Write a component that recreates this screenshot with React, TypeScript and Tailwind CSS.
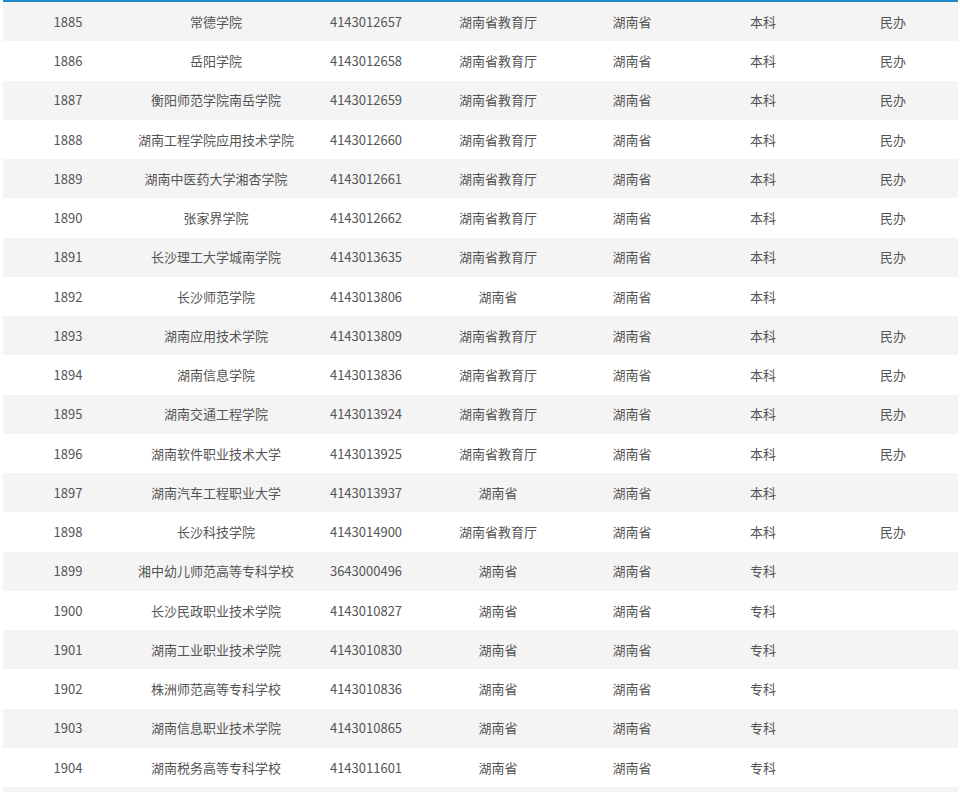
const rows: string[][] = [
  ["1885", "常德学院", "4143012657", "湖南省教育厅", "湖南省", "本科", "民办"],
  ["1886", "岳阳学院", "4143012658", "湖南省教育厅", "湖南省", "本科", "民办"],
  ["1887", "衡阳师范学院南岳学院", "4143012659", "湖南省教育厅", "湖南省", "本科", "民办"],
  ["1888", "湖南工程学院应用技术学院", "4143012660", "湖南省教育厅", "湖南省", "本科", "民办"],
  ["1889", "湖南中医药大学湘杏学院", "4143012661", "湖南省教育厅", "湖南省", "本科", "民办"],
  ["1890", "张家界学院", "4143012662", "湖南省教育厅", "湖南省", "本科", "民办"],
  ["1891", "长沙理工大学城南学院", "4143013635", "湖南省教育厅", "湖南省", "本科", "民办"],
  ["1892", "长沙师范学院", "4143013806", "湖南省", "湖南省", "本科", ""],
  ["1893", "湖南应用技术学院", "4143013809", "湖南省教育厅", "湖南省", "本科", "民办"],
  ["1894", "湖南信息学院", "4143013836", "湖南省教育厅", "湖南省", "本科", "民办"],
  ["1895", "湖南交通工程学院", "4143013924", "湖南省教育厅", "湖南省", "本科", "民办"],
  ["1896", "湖南软件职业技术大学", "4143013925", "湖南省教育厅", "湖南省", "本科", "民办"],
  ["1897", "湖南汽车工程职业大学", "4143013937", "湖南省", "湖南省", "本科", ""],
  ["1898", "长沙科技学院", "4143014900", "湖南省教育厅", "湖南省", "本科", "民办"],
  ["1899", "湘中幼儿师范高等专科学校", "3643000496", "湖南省", "湖南省", "专科", ""],
  ["1900", "长沙民政职业技术学院", "4143010827", "湖南省", "湖南省", "专科", ""],
  ["1901", "湖南工业职业技术学院", "4143010830", "湖南省", "湖南省", "专科", ""],
  ["1902", "株洲师范高等专科学校", "4143010836", "湖南省", "湖南省", "专科", ""],
  ["1903", "湖南信息职业技术学院", "4143010865", "湖南省", "湖南省", "专科", ""],
  ["1904", "湖南税务高等专科学校", "4143011601", "湖南省", "湖南省", "专科", ""],
];

const widths = ["w-[130px]", "w-[166px]", "w-[134px]", "w-[130px]", "w-[138px]", "w-[124px]", "w-[136px]"];

export default function App() {
  return (
    <div className="w-[960px] h-[792px] overflow-hidden bg-white text-[13px] text-[#555]" style={{ fontFamily: '"Microsoft YaHei", "Noto Sans CJK SC", sans-serif' }}>
      <div className="ml-[3px] w-[955px]">
        <div className="h-[2px] bg-[#1e88c7]" />
        {[...rows, ["", "", "", "", "", "", ""]].map((r, i) => (
          <div key={i} className={`flex h-[39.26px] items-center ${i % 2 === 0 ? "bg-[#f4f4f4]" : "bg-white"}`}>
            {r.map((c, j) => (
              <div key={j} className={`${widths[j]} shrink-0 text-center`}>{c}</div>
            ))}
          </div>
        ))}
      </div>
    </div>
  );
}
